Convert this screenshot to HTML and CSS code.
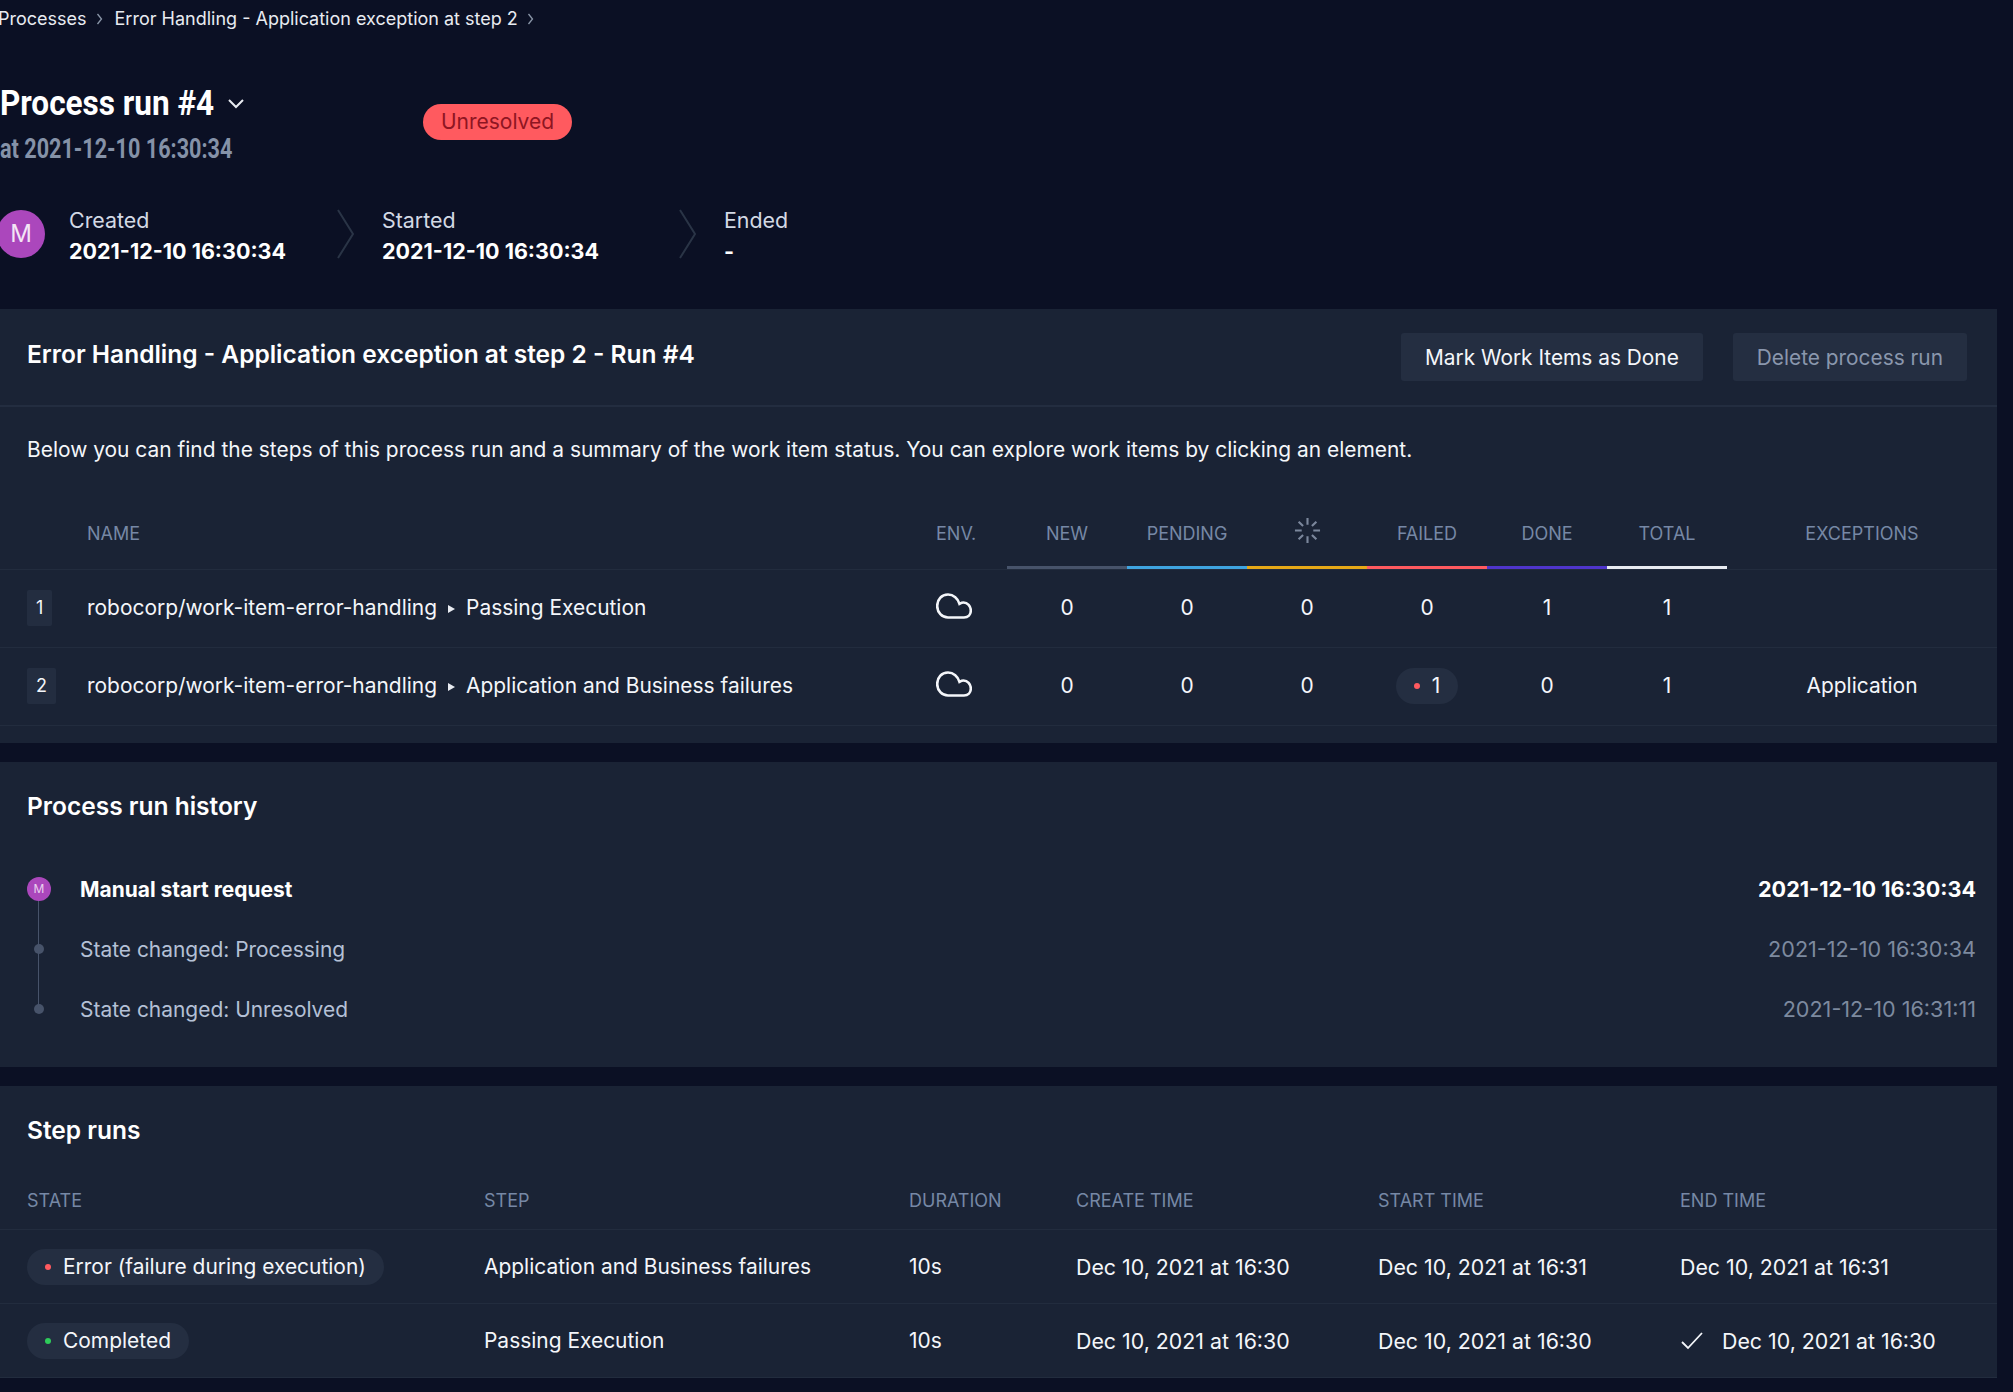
FILE: index.html
```html
<!DOCTYPE html>
<html lang="en">
<head>
    <meta charset="utf-8"/>
    <title>Process run #4</title>
    <link rel="stylesheet" href="styles.css">
</head>
<body>
<div class="page">
    <div class="crumbs">
        <span>Processes</span>
        <svg class="crumb-arrow" viewBox="0 0 8 14"><path d="M1.5 2l4 5-4 5"/></svg>
        <span>Error Handling - Application exception at step 2</span>
        <svg class="crumb-arrow" viewBox="0 0 8 14"><path d="M1.5 2l4 5-4 5"/></svg>
    </div>

    <div class="head">
        <div class="head-titles">
            <h1><span class="title-text">Process run #4</span>
                <svg class="caret" viewBox="0 0 18 12"><path d="M2 3l7 7 7-7"/></svg>
            </h1>
            <div class="head-sub"><span class="sub-text">at 2021-12-10 16:30:34</span></div>
        </div>
        <span class="status-pill">Unresolved</span>
    </div>

    <div class="meta">
        <div class="avatar">M</div>
        <div class="meta-item meta-created">
            <div class="meta-label">Created</div>
            <div class="meta-value">2021-12-10 16:30:34</div>
        </div>
        <svg class="meta-arrow" viewBox="0 0 18 50"><path d="M1 1l15 24-15 24"/></svg>
        <div class="meta-item meta-started">
            <div class="meta-label">Started</div>
            <div class="meta-value">2021-12-10 16:30:34</div>
        </div>
        <svg class="meta-arrow" viewBox="0 0 18 50"><path d="M1 1l15 24-15 24"/></svg>
        <div class="meta-item">
            <div class="meta-label">Ended</div>
            <div class="meta-value">-</div>
        </div>
    </div>

    <section class="panel panel-run">
        <div class="run-top">
            <h2>Error Handling - Application exception at step 2 - Run #4</h2>
            <div class="run-actions">
                <button class="btn">Mark Work Items as Done</button>
                <button class="btn btn-off">Delete process run</button>
            </div>
        </div>
        <p class="run-desc">Below you can find the steps of this process run and a summary of the work item status. You can explore work items by clicking an element.</p>

        <div class="steps-row steps-head">
            <div></div>
            <div class="cell-name">NAME</div>
            <div class="cell-env">ENV.</div>
            <div class="cell-num bar-new">NEW</div>
            <div class="cell-num bar-pending">PENDING</div>
            <div class="cell-num bar-progress">
                <svg class="spinner" viewBox="0 0 28 28">
                    <path d="M14 1v7M14 20v7M1 14h7M20 14h7M4.8 4.8l4.6 4.6M18.6 18.6l4.6 4.6M4.8 23.2l4.6-4.6M18.6 9.4l4.6-4.6"/>
                </svg>
            </div>
            <div class="cell-num bar-failed">FAILED</div>
            <div class="cell-num bar-done">DONE</div>
            <div class="cell-num bar-total">TOTAL</div>
            <div class="cell-num">EXCEPTIONS</div>
        </div>
        <div class="steps-row">
            <div><span class="step-no">1</span></div>
            <div class="cell-name">robocorp/work-item-error-handling<span class="tri"></span>Passing Execution</div>
            <div class="cell-env">
                <svg class="cloud" viewBox="0 0 36 26"><path d="M12 24.5H28C32 24.5 34.8 21.5 34.8 17.5C34.8 13 31.5 9.5 27.5 9.5C26 9.5 25 10 23.5 10.8C22 5.5 17.5 1.5 12 1.5C5.5 1.5 1.2 6.5 1.2 13C1.2 19.5 6 24.5 12 24.5Z"/></svg>
            </div>
            <div class="cell-num">0</div>
            <div class="cell-num">0</div>
            <div class="cell-num">0</div>
            <div class="cell-num">0</div>
            <div class="cell-num">1</div>
            <div class="cell-num">1</div>
            <div class="cell-num"></div>
        </div>
        <div class="steps-row">
            <div><span class="step-no">2</span></div>
            <div class="cell-name">robocorp/work-item-error-handling<span class="tri"></span>Application and Business failures</div>
            <div class="cell-env">
                <svg class="cloud" viewBox="0 0 36 26"><path d="M12 24.5H28C32 24.5 34.8 21.5 34.8 17.5C34.8 13 31.5 9.5 27.5 9.5C26 9.5 25 10 23.5 10.8C22 5.5 17.5 1.5 12 1.5C5.5 1.5 1.2 6.5 1.2 13C1.2 19.5 6 24.5 12 24.5Z"/></svg>
            </div>
            <div class="cell-num">0</div>
            <div class="cell-num">0</div>
            <div class="cell-num">0</div>
            <div class="cell-num"><span class="pill pill-count"><i class="dot dot-red"></i>1</span></div>
            <div class="cell-num">0</div>
            <div class="cell-num">1</div>
            <div class="cell-num">Application</div>
        </div>
    </section>

    <section class="panel panel-history">
        <h2>Process run history</h2>
        <div class="history">
            <div class="history-row history-first">
                <div class="history-mark"><span class="mini-avatar">M</span></div>
                <div class="history-text">Manual start request</div>
                <div class="history-time">2021-12-10 16:30:34</div>
            </div>
            <div class="history-row">
                <div class="history-mark"><span class="history-dot"></span></div>
                <div class="history-text">State changed: Processing</div>
                <div class="history-time">2021-12-10 16:30:34</div>
            </div>
            <div class="history-row history-last">
                <div class="history-mark"><span class="history-dot"></span></div>
                <div class="history-text">State changed: Unresolved</div>
                <div class="history-time">2021-12-10 16:31:11</div>
            </div>
        </div>
    </section>

    <section class="panel panel-runs">
        <h2>Step runs</h2>
        <div class="runs-row runs-head">
            <div>STATE</div>
            <div>STEP</div>
            <div>DURATION</div>
            <div>CREATE TIME</div>
            <div>START TIME</div>
            <div>END TIME</div>
        </div>
        <div class="runs-row">
            <div><span class="pill pill-state"><i class="dot dot-red"></i>Error (failure during execution)</span></div>
            <div>Application and Business failures</div>
            <div>10s</div>
            <div class="run-date">Dec 10, 2021 at 16:30</div>
            <div class="run-date">Dec 10, 2021 at 16:31</div>
            <div class="run-date">Dec 10, 2021 at 16:31</div>
        </div>
        <div class="runs-row">
            <div><span class="pill pill-state"><i class="dot dot-green"></i>Completed</span></div>
            <div>Passing Execution</div>
            <div>10s</div>
            <div class="run-date">Dec 10, 2021 at 16:30</div>
            <div class="run-date">Dec 10, 2021 at 16:30</div>
            <div class="run-date end-done">
                <svg class="check" viewBox="0 0 24 20"><path d="M2 11l6 6L22 2"/></svg>
                Dec 10, 2021 at 16:30
            </div>
        </div>
    </section>
</div>
</body>
</html>
```

FILE: styles.css
```css
html, body {
    margin: 0;
    height: 100%;
    overflow: hidden;
    background: #0b1024;
}

body {
    color: #f4f6fa;
    font-family: Inter, "Liberation Sans", sans-serif;
    font-size: 20.95px;
}

.page {
    width: 1997px;
}

h1, h2, p {
    margin: 0;
}

/* breadcrumbs */
.crumbs {
    display: flex;
    align-items: center;
    height: 37px;
    margin-left: -2px;
    font-size: 18px;
    color: #e8ebf1;
}

.crumb-arrow {
    width: 8px;
    height: 14px;
    margin: 0 11px 0 9px;
    fill: none;
    stroke: #8a96a8;
    stroke-width: 1.3;
}

/* page head */
.head {
    display: flex;
    margin-top: 45px;
    height: 84px;
}

.head-titles {
    width: 423px;
}

h1 {
    display: flex;
    align-items: center;
    height: 42px;
    font-family: Roboto, sans-serif;
    font-size: 35px;
    font-weight: 700;
    color: #fff;
}

/* the heading face is a narrow one, none is installed */
.title-text {
    display: inline-block;
    width: 216px;
    white-space: nowrap;
    transform: scaleX(.9);
    transform-origin: left center;
}

.caret {
    width: 18px;
    height: 12px;
    margin-left: 11px;
    fill: none;
    stroke: #e8ebf1;
    stroke-width: 2;
}

.head-sub {
    margin-top: 9px;
    font-family: Roboto, sans-serif;
    font-size: 27px;
    font-weight: 700;
    color: #8592a8;
}

.sub-text {
    display: inline-block;
    white-space: nowrap;
    transform: scaleX(.8);
    transform-origin: left center;
}

.status-pill {
    align-self: flex-start;
    margin-top: 22px;
    width: 149px;
    height: 36px;
    line-height: 36px;
    text-align: center;
    border-radius: 18px;
    background: #ff5a5f;
    color: #8e1522;
    font-size: 21px;
}

/* created / started / ended */
.meta {
    display: flex;
    align-items: center;
    height: 50px;
    margin-top: 43px;
    margin-left: -3px;
}

.avatar {
    width: 48px;
    height: 48px;
    line-height: 48px;
    border-radius: 50%;
    text-align: center;
    background: #ab47bc;
    color: #f3e5f5;
    font-size: 24px;
    margin-right: 24px;
}

.meta-item {
    margin-top: 3px;
}

.meta-label {
    font-size: 21.4px;
    color: #d3d9e4;
    line-height: 31px;
}

.meta-value {
    font-size: 21.5px;
    font-weight: 700;
    color: #fff;
    line-height: 31px;
}

.meta-created {
    width: 268px;
}

.meta-started {
    width: 297px;
}

.meta-arrow {
    width: 18px;
    height: 50px;
    margin-right: 27px;
    fill: none;
    stroke: #2a3446;
    stroke-width: 2;
}

/* panels */
.panel {
    background: #1a2335;
}

.panel h2 {
    font-size: 24.5px;
    line-height: 30px;
    font-weight: 600;
    color: #fff;
}

.panel-run {
    margin-top: 50px;
    height: 434px;
}

.run-top {
    display: flex;
    align-items: center;
    justify-content: space-between;
    height: 96px;
    padding: 0 30px 0 27px;
    border-bottom: 2px solid #232d40;
}

.run-top h2 {
    margin-top: -7px;
}

.run-actions {
    display: flex;
    gap: 30px;
}

.btn {
    height: 48px;
    padding: 0 24px;
    border: 0;
    border-radius: 3px;
    background: #242e41;
    color: #f4f6fa;
    font-family: Inter, "Liberation Sans", sans-serif;
    font-size: 20.85px;
}

.btn-off {
    color: #8a97ad;
}

.run-desc {
    padding: 29px 27px 0;
    line-height: 28px;
}

/* steps table */
.steps-row {
    display: grid;
    grid-template-columns: 87px 849px 71px repeat(6, 120px) 1fr;
    align-items: center;
    height: 78px;
    padding-bottom: 2px;
    border-bottom: 1px solid #222c3e;
    box-sizing: border-box;
}

.steps-head {
    height: 70px;
    padding-bottom: 0;
    margin-top: 36px;
    color: #7688a5;
    font-size: 18px;
}

.steps-head > div {
    display: flex;
    align-items: center;
    height: 100%;
    box-sizing: border-box;
    border-bottom: 3px solid transparent;
}

.steps-head > .cell-num {
    justify-content: center;
}

.bar-new { border-bottom-color: #47536a !important; }
.bar-pending { border-bottom-color: #3fa4e0 !important; }
.bar-progress { border-bottom-color: #e6a817 !important; }
.bar-failed { border-bottom-color: #ff5a5f !important; }
.bar-done { border-bottom-color: #4f35cc !important; }
.bar-total { border-bottom-color: #e8ebf1 !important; }

.cell-num {
    text-align: center;
}

.step-no {
    display: inline-block;
    margin-left: 27px;
    padding: 0 9px;
    height: 36px;
    line-height: 36px;
    border-radius: 2px;
    background: #232d40;
    font-size: 18px;
}

.tri {
    display: inline-block;
    width: 0;
    height: 0;
    margin: 0 11px 2px 11px;
    border-left: 7px solid #e8ebf1;
    border-top: 4px solid transparent;
    border-bottom: 4px solid transparent;
}

.cloud {
    display: block;
    width: 36px;
    height: 26px;
    margin-top: -3px;
    fill: none;
    stroke: #f4f6fa;
    stroke-width: 2.6;
}

.spinner {
    width: 27px;
    height: 27px;
    margin-top: -6px;
    fill: none;
    stroke: #7b879c;
    stroke-width: 2.2;
}

.pill {
    display: inline-flex;
    align-items: center;
    height: 36px;
    border-radius: 18px;
    background: #242e41;
}

.pill-count {
    padding: 0 18px;
}

.pill-state {
    padding: 0 18px;
}

.dot {
    display: inline-block;
    width: 6px;
    height: 6px;
    margin-right: 12px;
    border-radius: 50%;
}

.dot-red { background: #ff5a5f; }
.dot-green { background: #2ecc5a; }

/* history */
.panel-history {
    margin-top: 19px;
    height: 305px;
    box-sizing: border-box;
    padding: 29px 21px 0 27px;
}

.history {
    margin-top: 38px;
}

.history-row {
    position: relative;
    display: flex;
    align-items: center;
    height: 60px;
    color: #b4c0d6;
}

.history-mark {
    display: flex;
    justify-content: center;
    align-items: center;
    width: 24px;
    margin-right: 29px;
}

/* connecting line between the history marks */
.history-row::before {
    content: "";
    position: absolute;
    left: 11px;
    top: 0;
    bottom: 0;
    width: 1px;
    background: #47536a;
}

.history-first::before {
    top: 30px;
}

.history-last::before {
    bottom: 30px;
}

.mini-avatar {
    position: relative;
    width: 24px;
    height: 24px;
    line-height: 24px;
    border-radius: 50%;
    text-align: center;
    background: #ab47bc;
    color: #e9d2ee;
    font-size: 12px;
}

.history-dot {
    position: relative;
    width: 10px;
    height: 10px;
    border-radius: 50%;
    background: #47536a;
}

.history-text {
    flex: 1;
}

.history-time {
    font-size: 21.6px;
    color: #7d8a9f;
}

.history-first .history-text,
.history-first .history-time {
    font-weight: 700;
    color: #fff;
}

/* step runs */
.panel-runs {
    margin-top: 19px;
    height: 291px;
    box-sizing: border-box;
    padding-top: 29px;
}

.panel-runs h2 {
    padding-left: 27px;
}

.runs-row {
    display: grid;
    grid-template-columns: 457px 425px 167px 302px 302px 1fr;
    align-items: center;
    height: 74px;
    padding-left: 27px;
    border-bottom: 1px solid #222c3e;
    box-sizing: border-box;
}

.runs-head {
    height: 61px;
    padding-top: 2px;
    margin-top: 24px;
    color: #7688a5;
    font-size: 18px;
}

.run-date {
    font-size: 21.35px;
}

.end-done {
    display: flex;
    align-items: center;
}

.check {
    width: 24px;
    height: 20px;
    margin-right: 18px;
    fill: none;
    stroke: #f4f6fa;
    stroke-width: 1.8;
}
```
